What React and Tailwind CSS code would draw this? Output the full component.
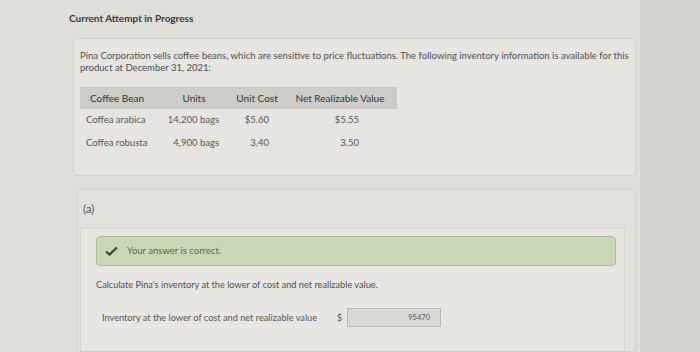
const rows = [
  ["Coffea arabica", "14,200 bags", "$5.60", "$5.55"],
  ["Coffea robusta", "4,900 bags", "3.40", "3.50"],
];

const App = () => {
  return (
    <div
      className="flex w-[700px] h-[352px] overflow-hidden bg-[#d3d2ce] text-[#4b4b4b]"
      style={{ fontFamily: "Lato, 'Open Sans', sans-serif" }}
    >
      <div className="w-[640px] h-full bg-[#dfded9] flex flex-col">
        {/* Title */}
        <p className="pl-[69px] pt-[11px] text-[10px] font-bold text-[#3a3a3a] leading-[14px]">
          Current Attempt in Progress
        </p>

        {/* Question card */}
        <div className="ml-[73px] mt-[13px] w-[563px] h-[138px] bg-[#e6e5e1] border border-[#d2d1cd] rounded-sm pl-[6px] pt-[11px]">
          <p className="text-[9.5px] leading-[12px] text-[#4e4e4e]">
            Pina Corporation sells coffee beans, which are sensitive to price fluctuations. The following inventory information is available for this
            <br />
            product at December 31, 2021:
          </p>

          <div className="mt-[13px] w-[317px]">
            <div className="grid grid-cols-[81px_66px_60px_110px] h-[22px] items-center bg-[#cdccc8] text-[#333] text-[10px]">
              <span className="pl-[10px]">Coffee Bean</span>
              <span className="text-center">Units</span>
              <span className="text-center">Unit Cost</span>
              <span className="text-center pr-[4px]">Net Realizable Value</span>
            </div>
            {rows.map((r) => (
              <div
                key={r[0]}
                className="grid grid-cols-[81px_66px_60px_110px] h-[22.5px] items-center text-[#555] text-[9.5px]"
              >
                <span className="pl-[6px]">{r[0]}</span>
                <span className="text-right pr-[8px]">{r[1]}</span>
                <span className="text-right pr-[18px]">{r[2]}</span>
                <span className="text-right pr-[38px]">{r[3]}</span>
              </div>
            ))}
          </div>
        </div>

        {/* Part (a) */}
        <div className="ml-[77px] mt-[13px] w-[559px] flex-1 bg-[#e2e1dd] border border-[#d2d1cd] rounded-t-sm flex flex-col">
          <div className="h-[38px] flex items-center pl-[5px] text-[11.5px] text-[#555]">(a)</div>
          <div className="flex-1 ml-[2px] mr-[10px] bg-[#e8e7e3] border-t border-l border-r border-[#d6d5d1] pl-[15px] pt-[7px]">
            <div className="w-[520px] h-[30px] bg-[#cbd8b6] border border-[#aab995] rounded-sm flex items-center pl-[8px] gap-[9px]">
              <svg width="13" height="10" viewBox="0 0 13 10">
                <path d="M1 5.5 L4.5 8.6 L12 1.4" fill="none" stroke="#3c5529" strokeWidth="2.3" />
              </svg>
              <span className="text-[9.5px] text-[#5a6b45]">Your answer is correct.</span>
            </div>

            <p className="mt-[13px] text-[9.2px] text-[#4e4e4e] leading-[12px]">
              Calculate Pina's inventory at the lower of cost and net realizable value.
            </p>

            <div className="mt-[17px] flex items-center pl-[6px]">
              <span className="text-[9.2px] text-[#555] w-[235px]">
                Inventory at the lower of cost and net realizable value
              </span>
              <span className="text-[9px] text-[#555] w-[10px]">$</span>
              <div className="w-[94px] h-[19px] bg-[#dad9d5] border border-[#b9b8b4] flex items-center justify-end pr-[10px] text-[7.5px] text-[#555]">
                95470
              </div>
            </div>
          </div>
        </div>
      </div>
      <div className="flex-1 h-full bg-[#d4d3cf]" />
    </div>
  );
};

export default App;
